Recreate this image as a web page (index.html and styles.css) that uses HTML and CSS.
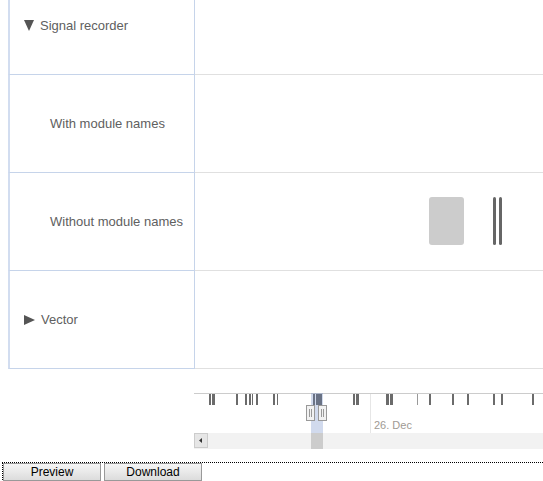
FILE: index.html
```html
<!DOCTYPE html>
<html lang="en">
<head>
    <meta charset="UTF-8">
    <title>Signal recorder</title>
    <link rel="stylesheet" href="styles.css">
</head>
<body>
    <div class="grid">
        <div class="row">
            <div class="label"><span class="tri-down"></span>Signal recorder</div>
            <div class="track"></div>
        </div>
        <div class="row">
            <div class="label sub">With module names</div>
            <div class="track"></div>
        </div>
        <div class="row">
            <div class="label sub">Without module names</div>
            <div class="track">
                <div class="block"></div>
                <div class="bar"></div>
                <div class="bar"></div>
            </div>
        </div>
        <div class="row">
            <div class="label"><span class="tri-right"></span>Vector</div>
            <div class="track"></div>
        </div>
    </div>

    <div class="navigator">
        <svg width="349" height="56" viewBox="0 0 349 56">
            <line x1="0" y1="0.5" x2="349" y2="0.5" stroke="#ccc"/>
            <g fill="#6b6b6b">
                <rect x="15" y="1" width="2" height="11"/>
                <rect x="18" y="1" width="3" height="11"/>
                <rect x="42" y="1" width="2" height="11"/>
                <rect x="51" y="1" width="2" height="11"/>
                <rect x="55" y="1" width="2" height="11"/>
                <rect x="58" y="1" width="1" height="11"/>
                <rect x="62" y="1" width="2" height="11"/>
                <rect x="79" y="1" width="2" height="11"/>
                <rect x="83" y="1" width="1" height="11"/>
                <rect x="119" y="1" width="2" height="11"/>
                <rect x="122" y="1" width="6" height="11"/>
                <rect x="159" y="1" width="2" height="11"/>
                <rect x="162" y="1" width="3" height="11"/>
                <rect x="192" y="1" width="3" height="11"/>
                <rect x="196" y="1" width="3" height="11"/>
                <rect x="223" y="1" width="1" height="11" fill="#999"/>
                <rect x="235" y="1" width="2" height="11"/>
                <rect x="258" y="1" width="2" height="11"/>
                <rect x="273" y="1" width="2" height="11"/>
                <rect x="299" y="1" width="2" height="11"/>
                <rect x="307" y="1" width="2" height="11"/>
                <rect x="338" y="1" width="2" height="11"/>
            </g>
            <line x1="176.5" y1="1" x2="176.5" y2="40" stroke="#e6e6e6"/>
            <text x="180" y="36" class="date">26. Dec</text>
            <rect x="117" y="0" width="12" height="40" fill="rgba(102,133,194,0.3)"/>
            <rect x="0" y="40" width="349" height="16" fill="#f2f2f2"/>
            <rect x="0.5" y="40.5" width="13" height="14" fill="#e6e6e6" stroke="#ccc"/>
            <path d="M5 47.5 L8 45 L8 50 Z" fill="#333"/>
            <rect x="117" y="40" width="12" height="16" fill="#ccc"/>
            <g fill="#f2f2f2" stroke="#999">
                <rect x="112.5" y="12.5" width="8" height="15"/>
                <rect x="124.5" y="12.5" width="8" height="15"/>
                <path d="M115.5 16 V24 M117.5 16 V24 M127.5 16 V24 M129.5 16 V24"/>
            </g>
        </svg>
    </div>

    <div class="toolbar">
        <button>Preview</button>
        <button>Download</button>
    </div>
</body>
</html>
```

FILE: styles.css
```css
* {
    box-sizing: border-box;
}
body {
    margin: 0;
    font-family: 'Liberation Sans', Arial, sans-serif;
    overflow: hidden;
}
.grid {
    margin: -23px 0 0 8px;
}
.row {
    display: flex;
    height: 98px;
}
.label {
    width: 187px;
    border-left: 2px solid #d2ddf0;
    border-right: 1px solid #c6d4ea;
    border-bottom: 1px solid #c6d4ea;
    display: flex;
    align-items: center;
    padding-left: 14px;
    font-size: 13px;
    color: #606060;
}
.label.sub {
    padding-left: 40px;
}
.track {
    flex: 1;
    border-bottom: 1px solid #e0e0e0;
    display: flex;
    align-items: center;
    padding-left: 234px;
}
.block {
    width: 35px;
    height: 48px;
    background: #ccc;
    border-radius: 3px;
    margin: 0 29px 1px 0;
}
.bar {
    width: 3px;
    height: 48px;
    background: #666;
    border-radius: 2px;
    margin: 0 3px 1px 0;
}
.tri-down {
    width: 0;
    height: 0;
    border-left: 5.5px solid transparent;
    border-right: 5.5px solid transparent;
    border-top: 11px solid #555;
    margin-right: 6px;
}
.tri-right {
    width: 0;
    height: 0;
    border-top: 5.5px solid transparent;
    border-bottom: 5.5px solid transparent;
    border-left: 11px solid #555;
    margin-right: 6px;
}
.navigator {
    margin: 24px 0 0 194px;
    height: 56px;
}
.navigator svg {
    display: block;
}
.date {
    font-family: 'Liberation Sans', Arial, sans-serif;
    font-size: 11px;
    fill: #a09a94;
}
.toolbar {
    margin: 13px 0 0 2px;
    border-top: 1px dotted #000;
    border-left: 1px dotted #000;
    height: 30px;
    display: flex;
    gap: 3px;
}
.toolbar button {
    width: 98px;
    height: 18px;
    padding: 0;
    font-family: 'Liberation Sans', Arial, sans-serif;
    font-size: 12px;
    color: #000;
    border: 1px solid #999;
    background: linear-gradient(#f6f6f6, #dcdcdc);
}
```
